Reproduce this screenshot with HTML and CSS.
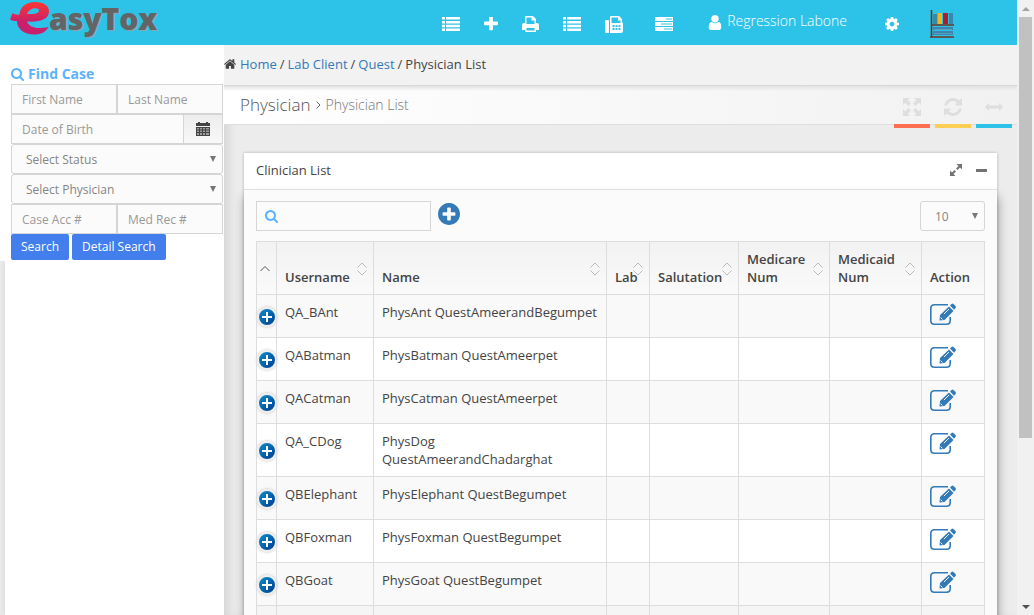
FILE: index.html
```html
<!DOCTYPE html>
<html lang="en">
<head>
<meta charset="utf-8">
<title>EasyTox - Physician List</title>
<link rel="stylesheet" href="styles.css">
</head>
<body>
<svg class="sprite" aria-hidden="true">
  <defs>
    <linearGradient id="logo-fill" x1="0" y1="0" x2="0" y2="1"><stop offset="0.1" stop-color="#f5333a"/><stop offset="0.6" stop-color="#c9206b"/></linearGradient>
    <symbol id="list" viewBox="0 0 18 14"><path d="M0 0h3v2.500H0zM4 0h14v2.500H4zM0 4h3v2.500H0zM4 4h14v2.500H4zM0 7.700h3v2.500H0zM4 7.700h14v2.500H4zM0 11.500h3V14H0zM4 11.500h14V14H4z"/></symbol>
    <symbol id="tasks" viewBox="0 0 18 14"><path fill-rule="evenodd" d="M0 0h18v4H0zM11 1.500h6v1h-6zM0 5h18v4H0zM6 6.500h11v1H6zM0 10h18v4H0zM9 11.500h8v1H9z"/></symbol>
    <symbol id="plus" viewBox="192 192 1408 1408"><path d="M1600 736v192q0 40-28 68t-68 28h-416v416q0 40-28 68t-68 28h-192q-40 0-68-28t-28-68v-416h-416q-40 0-68-28t-28-68v-192q0-40 28-68t68-28h416v-416q0-40 28-68t68-28h192q40 0 68 28t28 68v416h416q40 0 68 28t28 68z"/></symbol>
    <symbol id="plus-circle" viewBox="128 128 1536 1536"><path d="M1344 960v-128q0-26-19-45t-45-19h-256v-256q0-26-19-45t-45-19h-128q-26 0-45 19t-19 45v256h-256q-26 0-45 19t-19 45v128q0 26 19 45t45 19h256v256q0 26 19 45t45 19h128q26 0 45-19t19-45v-256h256q26 0 45-19t19-45zm320-64q0 209-103 385.500t-279.500 279.500-385.500 103-385.500-103-279.500-279.500-103-385.500 103-385.500 279.500-279.500 385.500-103 385.500 103 279.500 279.500 103 385.500z"/></symbol>
    <symbol id="search" viewBox="64 128 1664 1664"><path d="M1216 832q0-185-131.500-316.500t-316.500-131.500-316.500 131.500-131.500 316.500 131.500 316.500 316.500 131.500 316.500-131.500 131.500-316.500zm512 832q0 52-38 90t-90 38q-54 0-90-38l-343-342q-179 124-399 124-143 0-273.500-55.500t-225-150-150-225-55.500-273.500 55.500-273.500 150-225 225-150 273.500-55.500 273.500 55.500 225 150 150 225 55.500 273.500q0 220-124 399l343 343q37 37 37 90z"/></symbol>
    <symbol id="print" viewBox="0 0 17 16"><path fill-rule="evenodd" d="M3 0h8l3 3v4h1q2 0 2 2v5h-3v2H3v-2H0V9q0-2 2-2h1zM4.500 1.500V8h8V4.500H9.500v-3zM4.500 12v2.500h8V12z"/></symbol>
    <symbol id="fax" viewBox="0 0 18 17"><path fill-rule="evenodd" d="M1.500 4H3q1 0 1 1v11q0 1-1 1H1.500Q0 17 0 15.500v-10Q0 4 1.500 4zM6 0h8l3 3v3q1 1 1 2v7q0 2-2 2H5V1q0-1 1-1zM6.500 1.500V7h9V4.500H13v-3zM7.500 9v2h2V9zM10.500 9v2h2V9zM13.500 9v2h2V9zM7.500 12v2h2v-2zM10.500 12v2h2v-2zM13.500 12v2h2v-2z"/></symbol>
    <symbol id="user" viewBox="256 128 1280 1536"><path d="M1536 1399q0 109-62.500 187t-150.500 78h-854q-88 0-150.500-78t-62.500-187q0-85 8.500-160.500t31.500-152 58.500-131 94-89 134.500-34.500q131 128 313 128t313-128q76 0 134.500 34.500t94 89 58.500 131 31.500 152 8.500 160.500zm-256-887q0 159-112.500 271.500t-271.500 112.500-271.500-112.500-112.500-271.500 112.500-271.500 271.500-112.500 271.500 112.500 112.500 271.500z"/></symbol>
    <symbol id="cog" viewBox="128 128 1536 1536"><path d="M1152 896q0-106-75-181t-181-75-181 75-75 181 75 181 181 75 181-75 75-181zm512-109v222q0 12-8 23t-20 13l-185 28q-19 54-39 91 35 50 107 138 10 12 10 25t-9 23q-27 37-99 108t-94 71q-12 0-26-9l-138-108q-44 23-91 38-16 136-29 186-7 28-36 28h-222q-14 0-24.500-8.500t-11.500-21.500l-28-184q-49-16-90-37l-141 107q-10 9-25 9-14 0-25-11-126-114-165-168-7-10-7-23 0-12 8-23 15-21 51-66.500t54-70.500q-27-50-41-99l-183-27q-13-2-21-12.500t-8-23.500v-222q0-12 8-23t19-13l186-28q14-46 39-92-40-57-107-138-10-12-10-24 0-10 9-23 26-36 98.500-107.500t94.500-71.500q13 0 26 10l138 107q44-23 91-38 16-136 29-186 7-28 36-28h222q14 0 24.500 8.500t11.500 21.500l28 184q49 16 90 37l142-107q9-9 24-9 13 0 25 10 129 119 165 170 7 8 7 22 0 12-8 23-15 21-51 66.500t-54 70.500q26 50 41 98l183 28q13 2 21 12.500t8 23.500z"/></symbol>
    <symbol id="home" viewBox="90 250 1612 1286"><path d="M1472 992v480q0 26-19 45t-45 19h-384v-384h-256v384h-384q-26 0-45-19t-19-45v-480q0-1 .5-3t.5-3l575-474 575 474q1 2 1 6zm223-69l-62 74q-8 9-21 11h-3q-13 0-21-7l-692-577-692 577q-12 8-24 7-13-2-21-11l-62-74q-8-10-7-23.500t11-21.500l719-599q32-26 76-26t76 26l244 204v-195q0-14 9-23t23-9h192q14 0 23 9t9 23v408l219 182q10 8 11 21.500t-7 23.500z"/></symbol>
    <symbol id="refresh" viewBox="128 128 1536 1536"><path d="M1639 1056q0 5-1 7-64 268-268 434.500t-478 166.500q-146 0-282.500-55t-243.500-157l-129 129q-19 19-45 19t-45-19-19-45v-448q0-26 19-45t45-19h448q26 0 45 19t19 45-19 45l-137 137q71 66 161 102t187 36q134 0 250-65t186-179q11-17 53-117 8-23 30-23h192q13 0 22.500 9.500t9.500 22.500zm25-800v448q0 26-19 45t-45 19h-448q-26 0-45-19t-19-45 19-45l138-138q-148-137-349-137-134 0-250 65t-186 179q-11 17-53 117-8 23-30 23h-199q-13 0-22.500-9.500t-9.500-22.500v-7q65-268 270-434.500t480-166.500q146 0 284 55.500t245 156.500l130-129q19-19 45-19t45 19 19 45z"/></symbol>
    <symbol id="fullscreen" viewBox="0 0 18 18"><path d="M0 0h7L4.800 2.200 8 5.400 5.400 8 2.200 4.800 0 7z"/><path d="M18 0v7l-2.200-2.200L12.600 8 10 5.400l3.200-3.200L11 0zM18 18h-7l2.200-2.200-3.200-3.200 2.600-2.600 3.200 3.200L18 11zM0 18v-7l2.200 2.200L5.400 10 8 12.600l-3.200 3.200L7 18z"/></symbol>
    <symbol id="arrows-h" viewBox="0 0 18 8"><path d="M0 4l4-4v2.500h10V0l4 4-4 4V5.500H4V8z"/></symbol>
    <symbol id="expand" viewBox="0 0 12 12"><path d="M6.500 0H12v5.500l-2-2L7.500 6l-1.500-1.500L8.500 2zM5.500 12H0V6.500l2 2L4.500 6 6 7.500 3.500 10z"/></symbol>
    <symbol id="calendar" viewBox="0 0 14 14"><path d="M0 1h2V0h2v1h6V0h2v1h2v3H0z"/><path fill-rule="evenodd" d="M0 5h14v9H0zM1 6v1.500h2V6zM4 6v1.500h2V6zM7 6v1.500h2V6zM10 6v1.500h3V6zM1 8.500V10h2V8.500zM4 8.500V10h2V8.500zM7 8.500V10h2V8.500zM10 8.500V10h3V8.500zM1 11v2h2v-2zM4 11v2h2v-2zM7 11v2h2v-2zM10 11v2h3v-2z"/><path opacity=".5" d="M1 6h12v7H1z"/></symbol>
    <symbol id="sort" viewBox="0 0 10 14"><path fill="none" stroke="currentColor" d="M.5 5.500L5 1l4.500 4.500M.5 8.500L5 13l4.500-4.500"/></symbol>
    <symbol id="sort-up" viewBox="0 0 10 14"><path fill="none" stroke="currentColor" d="M.5 9L5 4.500 9.500 9"/></symbol>
    <symbol id="edit" viewBox="0 0 26 22"><path fill="none" stroke="currentColor" stroke-width="1.600" d="M18 1.800H4.500Q.8 1.800.8 5.500v12q0 3.700 3.700 3.700h12q3.700 0 3.700-3.700V14"/><path d="M9.500 17.500l.5-5.500L19 3.500l4.500 4.500-9 9zM20 2.500L21.500 1q1-.8 2 0L25.500 3q.8 1 0 2L24 6.700z"/><path fill="none" stroke="#fff" stroke-width=".9" d="M14 11l5-5M10.500 14.500l2 2"/></symbol>
    <symbol id="books" viewBox="0 0 24 28"><path fill="#3a87ad" d="M3 4h4v10H3zM19 3h4v11h-4zM3 17h20v3H3zM3 21h20v4H3z"/><path fill="#f2b61c" d="M8 3h4v11H8z"/><path fill="#b51a28" d="M13 3h5v11h-5z"/><path fill="#5c9dbd" d="M4 19h18v1H4zM4 23h18v1H4z"/><path fill="none" stroke="#6f3522" stroke-width="1.600" d="M1.500 0v27M1 15h23M0 27h24"/></symbol>
  </defs>
</svg>

<div class="shell">
  <div class="app">
    <header class="topbar">
      <a class="logo" href="#" aria-label="EasyTox">
        <svg class="logo-e" viewBox="10 2 39 33"><path fill="url(#logo-fill)" fill-rule="evenodd" d="M10 19.500L12.500 13c2 1.500 4 2 7 1.500C20 7 26 2 35 2c9 0 14 4 14 9.500C49 19 40 22.500 27 21.500c2 6 11 8 21.500 5.500C46 32 41 34.500 34 34.500 24 34.500 17 29 17 21c-3 0-5-.5-7-1.500zM27 14c6 .5 12-.5 12-3.500 0-4-10-3-12 3.500z"/></svg>
        <span class="logo-text">asyTox</span>
      </a>
      <nav class="nav">
        <a href="#" aria-label="Cases"><svg class="i-list"><use href="#list"/></svg></a>
        <a href="#" aria-label="Add"><svg class="i-plus"><use href="#plus"/></svg></a>
        <a href="#" aria-label="Print"><svg class="i-print"><use href="#print"/></svg></a>
        <a href="#" aria-label="Results"><svg class="i-list"><use href="#list"/></svg></a>
        <a href="#" aria-label="Fax"><svg class="i-fax"><use href="#fax"/></svg></a>
        <a class="nav-tasks" href="#" aria-label="Tasks"><svg class="i-list"><use href="#tasks"/></svg></a>
      </nav>
      <a class="account" href="#"><svg class="i-user"><use href="#user"/></svg><span>Regression Labone</span></a>
      <a class="settings" href="#" aria-label="Settings"><svg class="i-cog"><use href="#cog"/></svg></a>
      <a class="library" href="#" aria-label="Library"><svg class="i-books"><use href="#books"/></svg></a>
    </header>

    <div class="body">
      <aside class="sidebar">
        <form class="finder">
          <h2><svg class="i-find"><use href="#search"/></svg>Find Case</h2>
          <div class="row"><input aria-label="First Name" placeholder="First Name"><input aria-label="Last Name" placeholder="Last Name"></div>
          <div class="row"><input aria-label="Date of Birth" placeholder="Date of Birth"><button class="date" type="button" aria-label="Pick date"><svg class="i-cal"><use href="#calendar"/></svg></button></div>
          <div class="select"><select aria-label="Status"><option>Select Status</option></select></div>
          <div class="select"><select aria-label="Physician"><option>Select Physician</option></select></div>
          <div class="row"><input aria-label="Case Acc #" placeholder="Case Acc #"><input aria-label="Med Rec #" placeholder="Med Rec #"></div>
          <div class="actions"><button type="button">Search</button><button type="button">Detail Search</button></div>
        </form>
        <div class="side-fill"></div>
      </aside>

      <main class="main">
        <nav class="crumbs"><svg class="i-home"><use href="#home"/></svg><a href="#">Home</a><i>/</i><a href="#">Lab Client</a><i>/</i><a href="#">Quest</a><i>/</i><span>Physician List</span></nav>
        <div class="titlebar">
          <h1>Physician <svg class="i-angle" viewBox="0 0 5 8"><path d="M.5.5L4 4 .5 7.500"/></svg> <small>Physician List</small></h1>
          <div class="tools">
            <button class="red" type="button" aria-label="Full screen"><svg class="i-tool"><use href="#fullscreen"/></svg></button>
            <button class="yellow" type="button" aria-label="Refresh"><svg class="i-tool"><use href="#refresh"/></svg></button>
            <button class="blue" type="button" aria-label="Toggle sidebar"><svg class="i-wide"><use href="#arrows-h"/></svg></button>
          </div>
        </div>

        <section class="panel">
          <div class="panel-head">
            <h2>Clinician List</h2>
            <button type="button" aria-label="Maximize"><svg class="i-expand"><use href="#expand"/></svg></button>
            <button type="button" aria-label="Collapse"><span class="dash"></span></button>
          </div>
          <div class="panel-body">
            <div class="controls">
              <label class="search"><svg class="i-search"><use href="#search"/></svg><input type="search" aria-label="Search clinicians"></label>
              <button class="add" type="button" aria-label="Add clinician"><svg class="i-add"><use href="#plus-circle"/></svg></button>
              <div class="select size"><select aria-label="Rows per page"><option>10</option></select></div>
            </div>
            <table>
              <colgroup><col class="c-open"><col class="c-user"><col><col class="c-lab"><col class="c-sal"><col class="c-care"><col class="c-aid"><col class="c-act"></colgroup>
              <thead>
                <tr>
                  <th class="sorted" aria-label="Details"><svg class="i-sort"><use href="#sort-up"/></svg></th>
                  <th>Username<svg class="i-sort"><use href="#sort"/></svg></th>
                  <th>Name<svg class="i-sort"><use href="#sort"/></svg></th>
                  <th>Lab<svg class="i-sort"><use href="#sort"/></svg></th>
                  <th>Salutation<svg class="i-sort"><use href="#sort"/></svg></th>
                  <th>Medicare Num<svg class="i-sort"><use href="#sort"/></svg></th>
                  <th>Medicaid Num<svg class="i-sort"><use href="#sort"/></svg></th>
                  <th>Action</th>
                </tr>
              </thead>
              <tbody>
                <tr><td class="open"><button type="button" aria-label="Show details"></button></td><td>QA_BAnt</td><td>PhysAnt QuestAmeerandBegumpet</td><td></td><td></td><td></td><td></td><td><a href="#" aria-label="Edit"><svg class="i-edit"><use href="#edit"/></svg></a></td></tr>
                <tr><td class="open"><button type="button" aria-label="Show details"></button></td><td>QABatman</td><td>PhysBatman QuestAmeerpet</td><td></td><td></td><td></td><td></td><td><a href="#" aria-label="Edit"><svg class="i-edit"><use href="#edit"/></svg></a></td></tr>
                <tr><td class="open"><button type="button" aria-label="Show details"></button></td><td>QACatman</td><td>PhysCatman QuestAmeerpet</td><td></td><td></td><td></td><td></td><td><a href="#" aria-label="Edit"><svg class="i-edit"><use href="#edit"/></svg></a></td></tr>
                <tr><td class="open"><button type="button" aria-label="Show details"></button></td><td>QA_CDog</td><td>PhysDog QuestAmeerandChadarghat</td><td></td><td></td><td></td><td></td><td><a href="#" aria-label="Edit"><svg class="i-edit"><use href="#edit"/></svg></a></td></tr>
                <tr><td class="open"><button type="button" aria-label="Show details"></button></td><td>QBElephant</td><td>PhysElephant QuestBegumpet</td><td></td><td></td><td></td><td></td><td><a href="#" aria-label="Edit"><svg class="i-edit"><use href="#edit"/></svg></a></td></tr>
                <tr><td class="open"><button type="button" aria-label="Show details"></button></td><td>QBFoxman</td><td>PhysFoxman QuestBegumpet</td><td></td><td></td><td></td><td></td><td><a href="#" aria-label="Edit"><svg class="i-edit"><use href="#edit"/></svg></a></td></tr>
                <tr><td class="open"><button type="button" aria-label="Show details"></button></td><td>QBGoat</td><td>PhysGoat QuestBegumpet</td><td></td><td></td><td></td><td></td><td><a href="#" aria-label="Edit"><svg class="i-edit"><use href="#edit"/></svg></a></td></tr>
                <tr class="next"><td></td><td></td><td></td><td></td><td></td><td></td><td></td><td></td></tr>
              </tbody>
            </table>
          </div>
        </section>
      </main>
    </div>
  </div>
  <div class="scrollbar" aria-hidden="true"><span class="up"></span><span class="thumb"></span><span class="down"></span></div>
</div>
</body>
</html>
```
FILE: styles.css
```css
* { box-sizing: border-box; }
body { margin: 0; font: 13px/18px "Open Sans", "Noto Sans", sans-serif; color: #444; background: #ececec; }
button, input, select { font: inherit; margin: 0; }
button { cursor: pointer; }
a { color: #337ab7; text-decoration: none; }
svg { display: block; fill: currentColor; flex: none; }
h1, h2 { margin: 0; font-weight: 400; }
.sprite { position: absolute; width: 0; height: 0; }

.shell { display: flex; height: 100vh; overflow: hidden; }
.app { flex: 1; min-width: 0; display: flex; flex-direction: column; }

/* Top bar */
.topbar { display: flex; align-items: center; height: 45px; flex: none; padding: 0 63px 0 10px; background: #2dc3e8; }
.topbar a { color: #fff; }
.logo { display: flex; align-items: flex-start; height: 45px; margin-right: auto; }
.logo-e { width: 39px; height: 33px; margin-top: 2px; }
.topbar .logo-text { font-size: 30px; line-height: 38px; font-weight: 800; color: #636466; text-shadow: 1px 1px 0 #8fa3aa; }
.nav { display: flex; align-items: center; gap: 24px; padding-top: 3px; }
.nav-tasks { margin-left: 8px; }
.i-list { width: 18px; height: 14px; }
.i-plus { width: 14px; height: 14px; }
.i-print { width: 17px; height: 16px; }
.i-fax { width: 18px; height: 17px; }
.account { display: flex; align-items: center; gap: 5px; margin-left: 35px; font-size: 14px; font-weight: 300; }
.account span { padding-bottom: 4px; }
.i-user { width: 14px; height: 15px; }
.settings { margin-left: 38px; padding-top: 3px; }
.i-cog { width: 14px; height: 14px; }
.library { margin-left: 31px; padding-top: 3px; }
.i-books { width: 24px; height: 28px; }

/* Sidebar */
.body { flex: 1; min-height: 0; display: flex; }
.sidebar { width: 224px; flex: none; display: flex; flex-direction: column; }
.finder { padding: 20px 1px 1px 11px; background: #fff; }
.side-fill { flex: 1; margin-left: 5px; background: #fff; box-shadow: 0 0 8px rgba(0, 0, 0, .1); clip-path: inset(0 0 0 -5px); }
.finder h2 { display: flex; align-items: center; gap: 4px; padding-bottom: 1px; font-size: 14px; font-weight: 700; color: #5db2ff; }
.i-find { width: 13px; height: 13px; }
.row { display: flex; }
.row input { flex: 1; min-width: 0; height: 30px; padding: 0 10px; border: 1px solid #d5d5d5; border-radius: 0; background: #fbfbfb; font-size: 12px; color: #858585; }
.row input::placeholder { color: #999; opacity: 1; }
.date { width: 39px; display: flex; align-items: center; justify-content: center; padding: 0; border: 1px solid #d5d5d5; border-left: 0; background: linear-gradient(#ededed, #f8f8f8); color: #444; }
.i-cal { width: 14px; height: 14px; }
.select { position: relative; }
.select select { display: block; width: 100%; height: 30px; padding: 1px 14px 0; appearance: none; border: 1px solid #d5d5d5; border-radius: 3px; background: #fbfbfb; font-size: 12px; color: #858585; }
.select::after { content: ""; position: absolute; right: 7px; top: 12px; border: 3px solid transparent; border-top: 6px solid #777; border-bottom: 0; pointer-events: none; }
.actions { display: flex; gap: 3px; }
.actions button { height: 26px; padding: 0 10px; border: 0; border-radius: 2px; background: #427fed; color: #fff; font-size: 12px; }

/* Page heading */
.main { flex: 1; min-width: 0; background: #ececec; box-shadow: inset 9px 0 12px -6px rgba(0, 0, 0, .12); }
.crumbs { display: flex; align-items: center; height: 41px; padding-bottom: 2px; background: #f2f2f2; border-bottom: 1px solid #d8d8d8; }
.crumbs i { margin: 0 3px; font-style: normal; }
.i-home { width: 12px; height: 10px; margin-right: 4px; }
.titlebar { display: flex; justify-content: space-between; height: 39px; padding-left: 16px; border-bottom: 1px solid #dedede; background: linear-gradient(#e2e2e2, transparent 5px), linear-gradient(90deg, #fff, #f1f1f1); }
.titlebar h1 { display: flex; align-items: center; gap: 5px; font-size: 17px; font-weight: 300; color: #555; }
.titlebar small { font-size: 14px; color: #777; }
.i-angle { width: 5px; height: 8px; fill: none; stroke: #666; }
.tools { display: flex; gap: 5px; height: 42px; padding-right: 5px; }
.tools button { width: 36px; display: flex; align-items: center; justify-content: center; padding: 4px 0 0; border: 0; border-bottom: 4px solid; background: none; }
.tools svg { color: #dedede; }
.tools .red { border-color: #fb6e52; }
.tools .yellow { border-color: #ffce55; }
.tools .blue { border-color: #2dc3e8; }
.i-tool { width: 18px; height: 18px; }
.i-wide { width: 18px; height: 8px; }

/* Panel */
.panel { margin: 28px 20px 0; box-shadow: 0 0 3px rgba(0, 0, 0, .25); }
.panel-head { display: flex; align-items: center; gap: 14px; height: 36px; padding: 0 10px 2px 12px; background: #fff; }
.panel-head h2 { flex: 1; font-size: 13px; }
.panel-head button { display: flex; padding: 0; border: 0; background: none; color: #737373; }
.i-expand { width: 12px; height: 12px; }
.dash { width: 11px; height: 3px; background: #737373; }
.panel-body { padding: 11px 12px 12px; border-top: 1px solid #e0e0e0; background: #fbfbfb; box-shadow: 1px 8px 10px rgba(0, 0, 0, .35); }
.controls { display: flex; align-items: flex-start; gap: 8px; padding-bottom: 10px; }
.search { display: flex; align-items: center; gap: 6px; width: 175px; height: 30px; padding: 0 8px; border: 1px solid #d5d5d5; background: #fbfbfb; color: #5db2ff; }
.search input { flex: 1; min-width: 0; border: 0; outline: 0; background: none; }
.i-search { width: 13px; height: 13px; }
.add { padding: 2px 0 0; margin-left: -1px; border: 0; background: none; color: #337ab7; }
.i-add { width: 22px; height: 22px; }
.size { width: 65px; margin-left: auto; }

table { width: 100%; table-layout: fixed; border-collapse: collapse; background: #fff; }
th, td { padding: 8px; border: 1px solid #ddd; text-align: left; vertical-align: top; }
th { position: relative; height: 53px; vertical-align: bottom; font-weight: 600; }
thead tr { background: linear-gradient(#f2f2f2, #fafafa); }
tbody tr:nth-child(odd) { background: #f9f9f9; }
tbody .next { height: 43px; background: #f5f5f5; }
.c-open { width: 20px; }
.c-user { width: 97px; }
.c-lab { width: 43px; }
.c-sal { width: 89px; }
.c-care { width: 91px; }
.c-aid { width: 92px; }
.c-act { width: 63px; }
.i-sort { position: absolute; right: 6px; top: 20px; width: 10px; height: 14px; color: #bbb; }
.sorted .i-sort { color: #555; }
.i-edit { width: 26px; height: 22px; margin-bottom: 4px; }
.open { padding: 1px 0 0; vertical-align: middle; }
.open button { display: block; width: 20px; height: 20px; margin: 0 auto; padding: 0; border: 2px solid #eee; border-radius: 50%; box-shadow: 0 0 3px #bbb; background: linear-gradient(#fff, #fff) center / 10px 2px no-repeat, linear-gradient(#fff, #fff) center / 2px 10px no-repeat, linear-gradient(135deg, #0a8fd0, #003b8e); }

/* Scrollbar */
.scrollbar { width: 17px; flex: none; display: flex; flex-direction: column; align-items: center; padding: 7px 0 6px; background: #f1f1f1; }
.up { border: 4px solid transparent; border-bottom-color: #a3a3a3; border-top: 0; }
.thumb { width: 13px; height: 70%; margin-top: 6px; background: #c1c1c1; }
.down { margin-top: auto; border: 4px solid transparent; border-top-color: #505050; border-bottom: 0; }
```
